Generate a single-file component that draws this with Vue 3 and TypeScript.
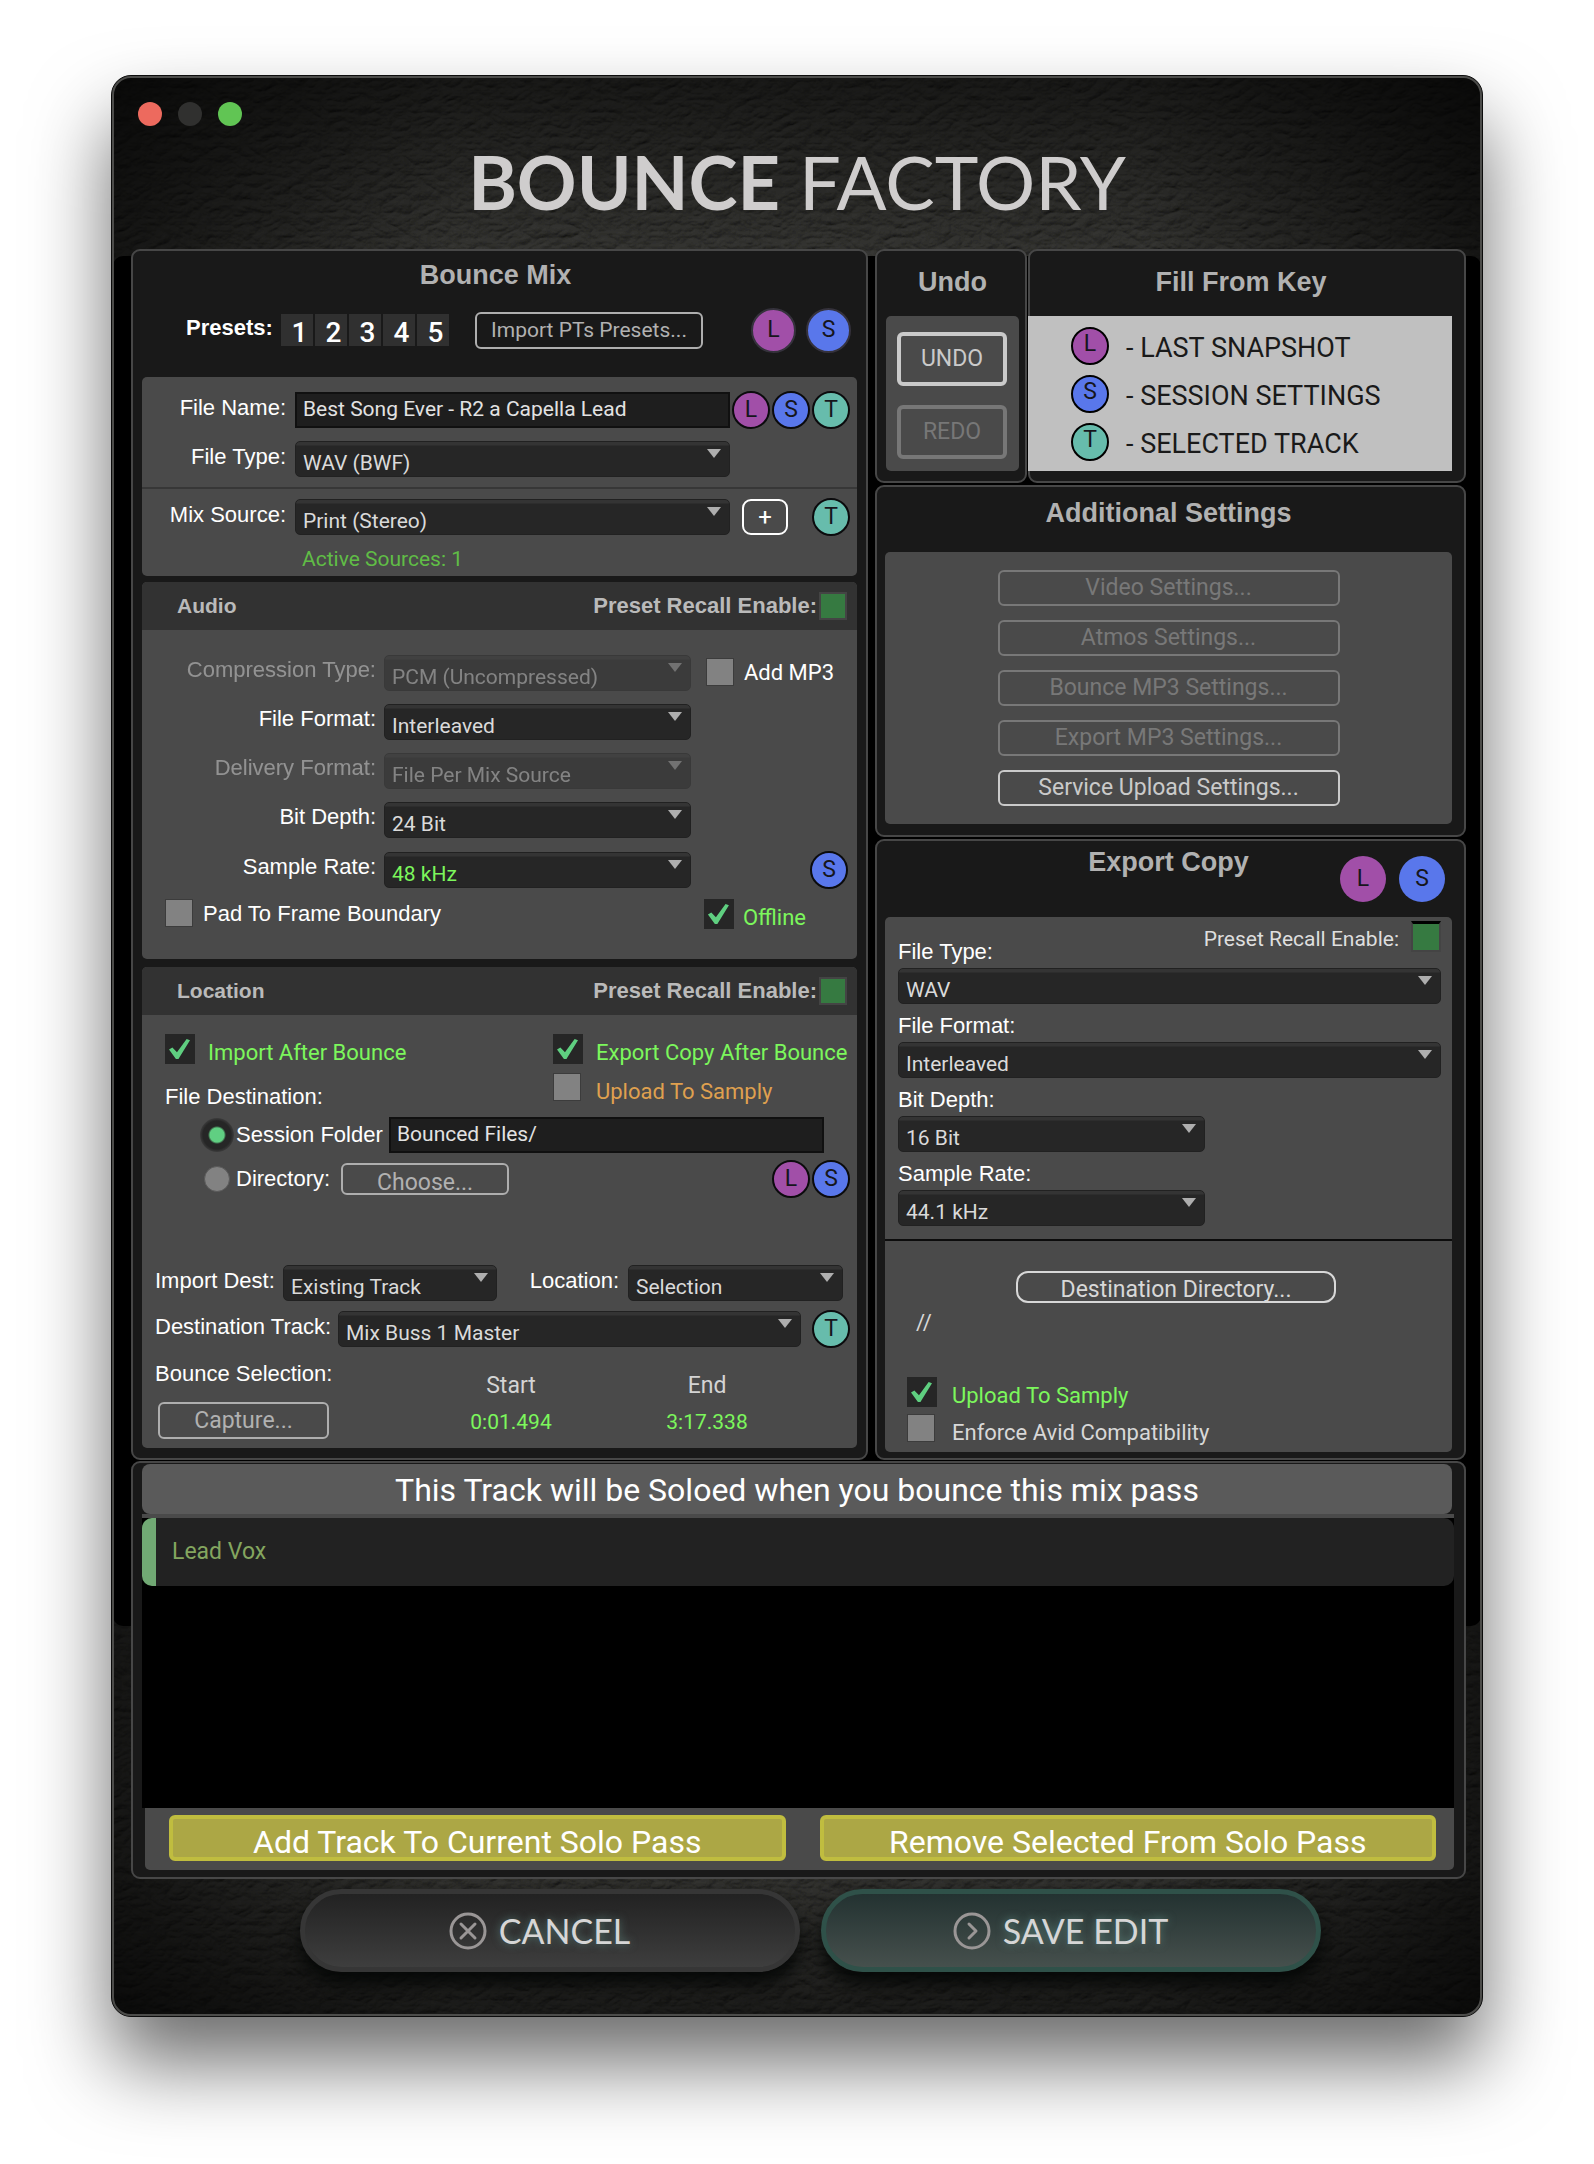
<script setup lang="ts">
import { reactive, ref } from 'vue'

type SourceKey = 'L' | 'S' | 'T'

const sourceNames: Record<SourceKey, string> = {
  L: 'last snapshot',
  S: 'session settings',
  T: 'selected track',
}

const legend: { key: SourceKey; text: string }[] = [
  { key: 'L', text: '- LAST SNAPSHOT' },
  { key: 'S', text: '- SESSION SETTINGS' },
  { key: 'T', text: '- SELECTED TRACK' },
]

const presets = [1, 2, 3, 4, 5]

const extraSettings = [
  { label: 'Video Settings...', enabled: false },
  { label: 'Atmos Settings...', enabled: false },
  { label: 'Bounce MP3 Settings...', enabled: false },
  { label: 'Export MP3 Settings...', enabled: false },
  { label: 'Service Upload Settings...', enabled: true },
]

interface SelectField {
  id: string
  label: string
  value: string
  disabled?: boolean
  accent?: boolean
}

const audioFields = reactive<SelectField[]>([
  { id: 'compression', label: 'Compression Type:', value: 'PCM (Uncompressed)', disabled: true },
  { id: 'format', label: 'File Format:', value: 'Interleaved' },
  { id: 'delivery', label: 'Delivery Format:', value: 'File Per Mix Source', disabled: true },
  { id: 'depth', label: 'Bit Depth:', value: '24 Bit' },
  { id: 'rate', label: 'Sample Rate:', value: '48 kHz', accent: true },
])

const exportFields = reactive<(SelectField & { narrow?: boolean })[]>([
  { id: 'x-type', label: 'File Type:', value: 'WAV' },
  { id: 'x-format', label: 'File Format:', value: 'Interleaved' },
  { id: 'x-depth', label: 'Bit Depth:', value: '16 Bit', narrow: true },
  { id: 'x-rate', label: 'Sample Rate:', value: '44.1 kHz', narrow: true },
])

const fileName = ref('Best Song Ever - R2 a Capella Lead')
const folder = ref('Bounced Files/')
const destination = ref('session')
const tracks = ['Lead Vox']
</script>

<template>
  <main class="desktop">
    <div class="window">
      <svg class="leather" aria-hidden="true">
        <filter id="leather" x="0" y="0" width="100%" height="100%">
          <feTurbulence type="turbulence" baseFrequency="0.05 0.08" numOctaves="3" seed="7" />
          <feDiffuseLighting surfaceScale="2" diffuseConstant="1" lighting-color="#383836">
            <feDistantLight azimuth="250" elevation="52" />
          </feDiffuseLighting>
        </filter>
        <rect width="100%" height="100%" filter="url(#leather)" />
      </svg>
      <div class="vignette"></div>

      <header class="titlebar">
        <div class="lights">
          <button class="light red" aria-label="Close"></button>
          <button class="light idle" aria-label="Minimize"></button>
          <button class="light green" aria-label="Zoom"></button>
        </div>
        <h1><b>BOUNCE</b> FACTORY</h1>
      </header>

      <div class="deck">
        <section class="panel mix">
          <h2>Bounce Mix</h2>
          <div class="presets">
            <span class="presets-label">Presets:</span>
            <div class="preset-keys">
              <button v-for="n in presets" :key="n" class="preset">{{ n }}</button>
            </div>
            <button class="btn import">Import PTs Presets...</button>
            <div class="dots wide">
              <button class="dot ringed L">L</button>
              <button class="dot ringed S">S</button>
            </div>
          </div>

          <div class="box">
            <div class="source-top">
              <div class="row source-row">
                <label for="file-name">File Name:</label>
                <input id="file-name" v-model="fileName" class="text" type="text" />
                <div class="dots">
                  <button v-for="k in (['L', 'S', 'T'] as SourceKey[])" :key="k" class="dot" :class="k" :title="sourceNames[k]">{{ k }}</button>
                </div>
              </div>
              <div class="row source-row type-row">
                <label for="file-type">File Type:</label>
                <span class="select">
                  <select id="file-type"><option>WAV (BWF)</option></select>
                  <svg viewBox="0 0 14 9"><path d="M0 0h14L7 9z" /></svg>
                </span>
              </div>
            </div>
            <div class="source-bottom">
              <div class="row source-row">
                <label for="mix-source">Mix Source:</label>
                <span class="select">
                  <select id="mix-source"><option>Print (Stereo)</option></select>
                  <svg viewBox="0 0 14 9"><path d="M0 0h14L7 9z" /></svg>
                </span>
                <div class="dots">
                  <button class="plus" aria-label="Add mix source">+</button>
                  <button class="dot T">T</button>
                </div>
              </div>
              <p class="active">Active Sources: 1</p>
            </div>
          </div>

          <div class="box audio">
            <div class="box-head">
              <h3>Audio</h3>
              <label class="recall">Preset Recall Enable:<input type="checkbox" class="led" checked /></label>
            </div>
            <div class="audio-rows">
              <div v-for="f in audioFields" :key="f.id" class="row audio-row">
                <label :for="f.id" :class="{ dim: f.disabled }">{{ f.label }}</label>
                <span class="select" :class="{ dim: f.disabled, accent: f.accent }">
                  <select :id="f.id" v-model="f.value" :disabled="f.disabled"><option>{{ f.value }}</option></select>
                  <svg viewBox="0 0 14 9"><path d="M0 0h14L7 9z" /></svg>
                </span>
                <label v-if="f.id === 'compression'" class="check level mp3"><input type="checkbox" /><span>Add MP3</span></label>
                <div v-if="f.id === 'rate'" class="dots"><button class="dot S">S</button></div>
              </div>
            </div>
            <div class="audio-foot">
              <label class="check level helv"><input type="checkbox" /><span>Pad To Frame Boundary</span></label>
              <label class="check tight green-text"><input type="checkbox" checked /><span>Offline</span></label>
            </div>
          </div>

          <div class="box location">
            <div class="box-head">
              <h3>Location</h3>
              <label class="recall">Preset Recall Enable:<input type="checkbox" class="led" checked /></label>
            </div>
            <div class="after">
              <label class="check green-text"><input type="checkbox" checked /><span>Import After Bounce</span></label>
              <label class="check green-text"><input type="checkbox" checked /><span>Export Copy After Bounce</span></label>
              <p class="dest-title">File Destination:</p>
              <label class="check orange-text"><input type="checkbox" /><span>Upload To Samply</span></label>
            </div>
            <div class="dest-row session">
              <label class="radio session-label"><input v-model="destination" type="radio" name="dest" value="session" /><span>Session Folder</span></label>
              <input v-model="folder" class="text" type="text" aria-label="Session folder path" />
            </div>
            <div class="dest-row directory">
              <label class="radio"><input v-model="destination" type="radio" name="dest" value="directory" /><span>Directory:</span></label>
              <button class="btn choose">Choose...</button>
              <div class="dots">
                <button class="dot L">L</button>
                <button class="dot S">S</button>
              </div>
            </div>
            <div class="row import-row">
              <label for="import-dest">Import Dest:</label>
              <span class="select">
                <select id="import-dest"><option>Existing Track</option></select>
                <svg viewBox="0 0 14 9"><path d="M0 0h14L7 9z" /></svg>
              </span>
              <label for="import-location">Location:</label>
              <span class="select">
                <select id="import-location"><option>Selection</option></select>
                <svg viewBox="0 0 14 9"><path d="M0 0h14L7 9z" /></svg>
              </span>
            </div>
            <div class="row track-row">
              <label for="dest-track">Destination Track:</label>
              <span class="select">
                <select id="dest-track"><option>Mix Buss 1 Master</option></select>
                <svg viewBox="0 0 14 9"><path d="M0 0h14L7 9z" /></svg>
              </span>
              <div class="dots"><button class="dot T">T</button></div>
            </div>
            <div class="selection">
              <div>
                <p class="selection-title">Bounce Selection:</p>
                <button class="btn capture">Capture...</button>
              </div>
              <div class="time"><span>Start</span><output>0:01.494</output></div>
              <div class="time"><span>End</span><output>3:17.338</output></div>
            </div>
          </div>
        </section>

        <div class="side">
          <div class="side-top">
            <section class="panel undo">
              <h2>Undo</h2>
              <div class="box undo-box">
                <button class="thick">UNDO</button>
                <button class="thick" disabled>REDO</button>
              </div>
            </section>
            <section class="panel fill">
              <h2>Fill From Key</h2>
              <ul class="legend">
                <li v-for="item in legend" :key="item.key">
                  <span class="dot" :class="item.key">{{ item.key }}</span><span class="legend-text">{{ item.text }}</span>
                </li>
              </ul>
            </section>
          </div>

          <section class="panel extra">
            <h2>Additional Settings</h2>
            <div class="box extra-box">
              <button v-for="s in extraSettings" :key="s.label" class="btn setting" :disabled="!s.enabled">{{ s.label }}</button>
            </div>
          </section>

          <section class="panel export">
            <div class="export-head">
              <h2>Export Copy</h2>
              <div class="dots wide">
                <button class="dot big L">L</button>
                <button class="dot big S">S</button>
              </div>
            </div>
            <div class="box export-box">
              <div class="export-fields">
                <label class="export-recall">Preset Recall Enable:<input type="checkbox" class="led" checked /></label>
                <template v-for="f in exportFields" :key="f.id">
                  <label class="stacked" :for="f.id">{{ f.label }}</label>
                  <span class="select" :class="{ narrow: f.narrow }">
                    <select :id="f.id" v-model="f.value"><option>{{ f.value }}</option></select>
                    <svg viewBox="0 0 14 9"><path d="M0 0h14L7 9z" /></svg>
                  </span>
                </template>
              </div>
              <div class="export-dest">
                <button class="btn directory-btn">Destination Directory...</button>
                <p class="path">//</p>
                <label class="check green-text"><input type="checkbox" checked /><span>Upload To Samply</span></label>
                <label class="check pale-text"><input type="checkbox" /><span>Enforce Avid Compatibility</span></label>
              </div>
            </div>
          </section>
        </div>

        <section class="panel solo">
          <h2 class="solo-title">This Track will be Soloed when you bounce this mix pass</h2>
          <ul class="tracks">
            <li v-for="t in tracks" :key="t">{{ t }}</li>
          </ul>
          <div class="solo-actions">
            <button>Add Track To Current Solo Pass</button>
            <button>Remove Selected From Solo Pass</button>
          </div>
        </section>
      </div>

      <footer class="actions">
        <button class="pill">
          <svg viewBox="0 0 38 38"><circle cx="19" cy="19" r="17" /><path d="M12 12l14 14M26 12L12 26" /></svg>
          CANCEL
        </button>
        <button class="pill save">
          <svg viewBox="0 0 38 38"><circle cx="19" cy="19" r="17" /><path d="M16 12l7 7-7 7" /></svg>
          SAVE EDIT
        </button>
      </footer>
    </div>
  </main>
</template>

<style>
body {
  margin: 0;
  background: #fff;
}
</style>

<style scoped>
* {
  box-sizing: border-box;
}
h1,
h2,
h3,
p,
ul {
  margin: 0;
  padding: 0;
}
ul {
  list-style: none;
}
button,
input,
select {
  margin: 0;
  padding: 0;
  border: 0;
  font: inherit;
  color: inherit;
  background: none;
}
.desktop {
  padding: 75px 111px 147px;
  overflow: hidden;
  font-family: Roboto, sans-serif;
  font-size: 22px;
  line-height: 28px;
  color: #fff;
}
.window {
  position: relative;
  border: 1px solid #0c0c0c;
  border-radius: 20px;
  background: #1b1b19;
  box-shadow: 0 46px 80px rgba(0, 0, 0, 0.58);
}
.window::after {
  content: '';
  position: absolute;
  inset: 0;
  border: 2px solid #4c4c4a;
  border-radius: 19px;
  pointer-events: none;
}
.leather,
.vignette {
  position: absolute;
  inset: 0;
  width: 100%;
  height: 100%;
  border-radius: 19px;
}
.leather {
  clip-path: inset(0 round 19px);
}
.vignette {
  background:
    linear-gradient(90deg, rgba(0, 0, 0, 0.6), transparent 25%, transparent 75%, rgba(0, 0, 0, 0.6)),
    linear-gradient(180deg, rgba(0, 0, 0, 0.55), transparent 180px, transparent 1780px, rgba(0, 0, 0, 0.5));
}
.titlebar {
  position: relative;
  height: 173px;
  padding-top: 26px;
}
.lights {
  display: flex;
  gap: 16px;
  padding-left: 26px;
}
.light {
  width: 24px;
  height: 24px;
  border-radius: 50%;
}
.red {
  background: #ed6a5e;
}
.idle {
  background: #30302f;
}
.green {
  background: #61c554;
}
h1 {
  margin-top: 16px;
  text-align: center;
  font: 400 74px/80px Lato, sans-serif;
  color: #cfcdcd;
}
h1 b {
  font-weight: 700;
}

.deck {
  position: relative;
  display: grid;
  grid-template-columns: minmax(0, 737fr) minmax(0, 591fr);
  gap: 1px 7px;
  padding: 0 16px 0 19px;
}
.deck::before {
  content: '';
  position: absolute;
  inset: 7px 1px 253px 1px;
  border-radius: 10px;
  background: #000;
}
.panel {
  position: relative;
  border: 2px solid #474747;
  border-radius: 9px;
  background: #191919;
}
h2 {
  text-align: center;
  font: 700 27px/32px 'Liberation Sans', Arial, sans-serif;
  color: #b1b1b1;
}
.box {
  border-radius: 5px;
  background: #4a4a4a;
}
.mix {
  padding: 8px 9px 10px;
}
.mix h2 {
  padding-right: 8px;
}

.presets {
  display: flex;
  align-items: center;
  margin: 16px 0 24px;
  padding: 0 6px 0 44px;
  height: 46px;
}
.presets-label {
  width: 95px;
  padding-bottom: 4px;
  font: 700 22px/28px 'Liberation Sans', Arial, sans-serif;
}
.preset-keys {
  display: flex;
  gap: 2px;
}
.preset {
  width: 32px;
  height: 32px;
  padding: 5px 0 0 5px;
  background: #303030;
  font-weight: 500;
  font-size: 28px;
  line-height: 27px;
}
.btn {
  border: 2px solid #aeaeae;
  border-radius: 6px;
  color: #b1b1b1;
  font-size: 23px;
  line-height: 30px;
}
.btn.import {
  width: 228px;
  height: 37px;
  margin-left: 26px;
  font-size: 21px;
}
.dots {
  display: flex;
  align-items: center;
  justify-content: flex-end;
  gap: 2px;
  padding-right: 7px;
}
.dots.wide {
  gap: 10px;
  margin-left: auto;
  padding-right: 0;
}
.dot {
  flex: none;
  width: 38px;
  height: 38px;
  border: 2px solid #0b0b0d;
  border-radius: 50%;
  color: #16161c;
  font-size: 23px;
  line-height: 30px;
  text-align: center;
}
.dot.ringed {
  width: 45px;
  height: 45px;
  border-color: #35323c;
  line-height: 38px;
}
.dot.big {
  width: 46px;
  height: 46px;
  border: 0;
  line-height: 42px;
}
.dot.L {
  background: #a14fa8;
}
.dot.S {
  background: #5977eb;
}
.dot.T {
  background: #67bcac;
}

.row {
  display: grid;
  align-items: center;
}
.row > label {
  padding-bottom: 4px;
}
label,
.dest-title,
.selection-title {
  font-family: 'Liberation Sans', Arial, sans-serif;
}
.source-row {
  grid-template-columns: 153px minmax(0, 1fr) 127px;
  min-height: 38px;
}
.source-row > label {
  padding-right: 9px;
  text-align: right;
}
.source-top {
  padding: 14px 0 10px;
  border-bottom: 2px solid #373737;
}
.type-row {
  margin-top: 11px;
  min-height: 37px;
}
.source-bottom {
  padding: 9px 0 3px;
}
.text {
  width: 100%;
  height: 36px;
  padding: 0 6px 3px;
  border: 2px solid #101010;
  background: #1e1e1e;
  color: #e2e2e2;
  font-family: Roboto, sans-serif;
  font-size: 21px;
}
.select {
  position: relative;
  display: block;
  height: 36px;
}
.select select {
  width: 100%;
  height: 100%;
  padding: 8px 30px 0 7px;
  border: 1px solid #212121;
  border-radius: 5px;
  background: linear-gradient(#343434 3px, #262626 4px);
  color: #dadada;
  appearance: none;
  font-family: Roboto, sans-serif;
  font-size: 21px;
  line-height: 26px;
  opacity: 1;
}
.select svg {
  position: absolute;
  top: 8px;
  right: 9px;
  width: 14px;
  height: 9px;
  fill: #aeaeae;
  pointer-events: none;
}
.dim {
  opacity: 0.4;
}
.accent select {
  color: #7cf75c;
}
.plus {
  width: 46px;
  height: 36px;
  margin-right: 22px;
  border: 2px solid #fff;
  border-radius: 9px;
  font-weight: 400;
  font-size: 24px;
  line-height: 30px;
}
.active {
  margin-top: 9px;
  padding-left: 160px;
  color: #60bd46;
  font-size: 21px;
}

.audio {
  margin-top: 6px;
}
.location {
  margin-top: 8px;
}
.box-head {
  display: flex;
  align-items: center;
  justify-content: space-between;
  height: 48px;
  padding: 0 10px 0 35px;
  border-radius: 5px 5px 0 0;
  background: #323232;
}
h3 {
  font: 700 21px/28px 'Liberation Sans', Arial, sans-serif;
  color: #bababa;
}
.recall {
  display: flex;
  align-items: center;
  gap: 2px;
  font-weight: 700;
  color: #bababa;
}
.led {
  width: 28px;
  height: 28px;
  border: 2px solid #444;
  background: #367a41;
  appearance: none;
}
.audio-rows {
  display: grid;
  gap: 13px;
  padding-top: 25px;
}
.audio-row {
  grid-template-columns: 242px minmax(0, 1fr) 166px;
  height: 36px;
}
.audio-row > label:first-child {
  padding-right: 8px;
  padding-bottom: 6px;
  text-align: right;
}
.audio-row > .dots {
  padding-right: 9px;
}
.audio-foot {
  display: flex;
  justify-content: space-between;
  padding: 12px 51px 26px 23px;
}

.check {
  display: flex;
  align-items: flex-start;
  gap: 13px;
  font-family: Roboto, sans-serif;
  line-height: 30px;
}
.check span {
  margin-top: 4px;
}
.check.level {
  gap: 8px;
}
.check.level span {
  margin-top: 0;
}
.check.tight {
  gap: 9px;
}
.check.mp3 {
  padding: 0 0 0 15px;
}
.check.helv {
  font-family: 'Liberation Sans', Arial, sans-serif;
}
.check input {
  flex: none;
  width: 28px;
  height: 28px;
  margin-right: 2px;
  border: 1px solid #3c3c3c;
  background: #828282;
  appearance: none;
}
.check input:checked {
  position: relative;
  width: 30px;
  height: 30px;
  margin-right: 0;
  border: 0;
  background: #262626;
}
.check input:checked::after {
  content: '';
  position: absolute;
  inset: 5px 5px 5px 4px;
  background: #5fcf80;
  clip-path: polygon(0 52%, 16% 42%, 38% 66%, 84% 0, 100% 6%, 45% 100%, 33% 100%);
}
.green-text {
  color: #7cf75c;
}
.orange-text {
  color: #dfa04f;
}
.pale-text {
  color: #d8d8d8;
}

.after {
  display: grid;
  grid-template-columns: minmax(0, 388fr) minmax(0, 304fr);
  gap: 5px 0;
  padding: 19px 0 0 23px;
}
.after .check {
  white-space: nowrap;
}
.dest-title {
  padding-top: 10px;
}
.dest-row {
  display: flex;
  align-items: center;
}
.session {
  margin-top: 6px;
  padding: 0 33px 0 58px;
}
.directory {
  margin-top: 7px;
  padding-left: 58px;
  height: 38px;
}
.directory .dots {
  margin-left: auto;
}
.radio {
  display: flex;
  flex: none;
  align-items: center;
  gap: 2px;
}
.session-label {
  width: 189px;
}
.radio input {
  width: 26px;
  height: 26px;
  margin: 4px;
  border: 1px solid #5a5a5a;
  border-radius: 50%;
  background: #828282;
  appearance: none;
}
.radio input:checked {
  width: 34px;
  height: 34px;
  margin: 0;
  border: 0;
  background: radial-gradient(circle, #60cf82 7px, #262626 9px, #262626 14px, #3c3c3c 17px);
}
.choose {
  width: 168px;
  height: 32px;
  margin-left: 11px;
  padding-top: 5px;
  line-height: 26px;
}
.import-row {
  grid-template-columns: 128px minmax(0, 214fr) 131px minmax(0, 215fr);
  margin-top: 67px;
  padding: 0 14px 0 13px;
}
.import-row label:nth-of-type(2) {
  padding-right: 9px;
  text-align: right;
}
.track-row {
  grid-template-columns: 183px minmax(0, 1fr) 56px;
  margin-top: 9px;
  padding-left: 13px;
}
.selection {
  display: grid;
  grid-template-columns: 258fr 196fr 196fr 52fr;
  padding: 12px 0 9px 13px;
}
.capture {
  width: 171px;
  height: 37px;
  margin: 14px 0 0 3px;
}
.capture,
.choose {
  display: block;
}
.time {
  display: grid;
  align-content: start;
  gap: 8px;
  padding-top: 12px;
  text-align: center;
  color: #d4d4d4;
}
.time span {
  font-size: 23px;
}
.time output {
  font-size: 21px;
  color: #7cf75c;
}

.side {
  display: flex;
  flex-direction: column;
  gap: 2px;
}
.side-top {
  display: grid;
  grid-template-columns: minmax(0, 152fr) minmax(0, 438fr);
  gap: 1px;
}
.undo {
  padding: 15px 6px 10px 9px;
}
.undo-box {
  display: grid;
  gap: 19px;
  margin-top: 18px;
  padding: 16px 12px 12px 11px;
}
.thick {
  height: 54px;
  border: 4px solid #cacaca;
  border-radius: 6px;
  color: #cacaca;
  font-size: 23px;
}
.thick:disabled {
  border-color: #777;
  color: #777;
}
.fill {
  padding: 15px 12px 10px 0;
}
.legend {
  margin: 18px 0 0 -2px;
  padding: 6px 0 5px 43px;
  background: #c0c0c0;
}
.legend li {
  display: flex;
  align-items: center;
  gap: 17px;
  height: 48px;
  color: #1a1a1a;
  font-size: 27px;
}
.legend-text {
  padding-top: 4px;
}
.legend .dot {
  border-color: #000;
}
.extra {
  padding: 10px 12px 11px 8px;
}
.extra-box {
  display: grid;
  justify-content: center;
  grid-template-columns: minmax(0, 342px);
  gap: 14px;
  margin-top: 23px;
  padding: 18px 0;
}
.setting {
  height: 36px;
  border-color: #cacaca;
  color: #cacaca;
}
.setting:disabled {
  border-color: #787878;
  color: #787878;
}
.export {
  padding: 0 12px 6px 8px;
}
.export-head {
  display: grid;
  height: 76px;
}
.export-head > * {
  grid-area: 1 / 1;
  align-self: start;
}
.export-head h2 {
  padding-top: 5px;
}
.export-head .dots {
  gap: 13px;
  padding: 15px 7px 0 0;
}
.export-fields {
  position: relative;
  padding: 13px 11px 13px 13px;
  border-bottom: 2px solid #0c0c0c;
}
.export-recall {
  position: absolute;
  top: 4px;
  right: 11px;
  display: flex;
  align-items: flex-start;
  gap: 12px;
  font-family: Roboto, sans-serif;
  font-size: 21px;
  line-height: 36px;
  color: #dedede;
}
.export-recall .led {
  width: 30px;
  height: 31px;
  border-top: 3px solid #000;
}
.stacked {
  display: block;
  margin: 8px 0 2px;
}
.select.narrow {
  width: 307px;
}
.export-dest {
  padding: 30px 22px 4px;
}
.directory-btn {
  display: block;
  width: 320px;
  height: 32px;
  margin: 0 94px 0 auto;
  padding-top: 4px;
  border-color: #d8d8d8;
  border-radius: 12px;
  color: #d8d8d8;
  line-height: 26px;
}
.path {
  margin: 6px 0 40px 9px;
  color: #d8d8d8;
}
.export-dest .check {
  gap: 15px;
}
.export-dest .check + .check {
  margin-top: 3px;
}

.solo {
  grid-column: 1 / -1;
  padding: 1px 10px 7px 9px;
}
.solo-title {
  margin-right: 2px;
  padding-top: 2px;
  border-radius: 8px;
  background: #5a5a5a;
  font: 400 32px/48px Roboto, sans-serif;
  color: #fff;
}
.tracks {
  height: 294px;
  border-top: 4px solid #4a4a4a;
  background: #000;
}
.tracks li {
  height: 68px;
  padding-left: 16px;
  border-left: 14px solid #71a974;
  border-radius: 10px;
  background: #222;
  color: #84a65f;
  font-size: 23px;
  line-height: 68px;
}
.solo-actions {
  display: grid;
  grid-template-columns: 1fr 1fr;
  gap: 34px;
  margin-left: 3px;
  padding: 7px 18px 9px 24px;
  border-radius: 0 0 5px 5px;
  background: #4a4a4a;
}
.solo-actions button {
  height: 46px;
  padding-top: 7px;
  border: 4px solid #c0bd3f;
  border-radius: 6px;
  background: #aca745;
  font-size: 32px;
  line-height: 32px;
}

.actions {
  position: relative;
  display: flex;
  justify-content: center;
  gap: 21px;
  padding: 10px 0 44px 26px;
}
.pill {
  display: flex;
  flex: 0 1 500px;
  align-items: center;
  justify-content: center;
  gap: 12px;
  height: 83px;
  padding-right: 20px;
  border: 5px solid #363636;
  border-radius: 42px;
  background: linear-gradient(#222, #3e3e3e);
  box-shadow: 0 12px 18px #060807;
  color: #d6d6d6;
  font: 400 34px/40px Lato, sans-serif;
  text-shadow: 0 0 8px rgba(110, 170, 160, 0.6);
}
.pill svg {
  width: 38px;
  height: 38px;
  fill: none;
  stroke: #9a9696;
  stroke-width: 3;
  stroke-linecap: round;
  stroke-linejoin: round;
}
.save {
  border-color: #2f5149;
  background: linear-gradient(#233231, #46504d);
}
</style>
